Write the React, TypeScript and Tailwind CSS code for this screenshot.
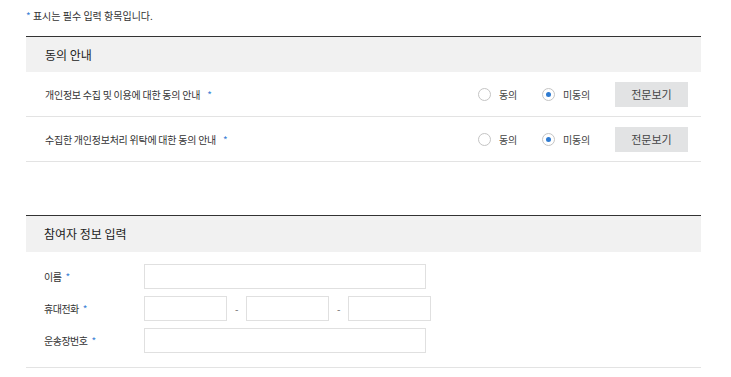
import React from "react";

const font = { fontFamily: '"Noto Sans CJK KR", "Noto Sans", sans-serif' };

function Star() {
  return <span className="text-[#3b82d6] ml-[4px]">*</span>;
}

function Radio({ checked, label }: { checked?: boolean; label: string }) {
  return (
    <div className="flex items-center">
      <span className="w-[13px] h-[13px] rounded-full border border-[#c4c4c4] bg-white flex items-center justify-center">
        {checked && <span className="w-[5px] h-[5px] rounded-full bg-[#2f7bd1]" />}
      </span>
      <span className="ml-[8px] text-[10px] tracking-[-0.25px] text-[#444]">{label}</span>
    </div>
  );
}

function ConsentRow({ title }: { title: string }) {
  return (
    <div className="h-[45px] border-b border-[#e3e3e3] flex items-center pl-[19px] pr-[13px]">
      <div className="text-[10px] tracking-[-0.25px] text-[#333] flex-1">
        {title}
        <span className="text-[#3b82d6] ml-[7px]">*</span>
      </div>
      <div className="flex items-center">
        <div className="w-[64px]">
          <Radio label="동의" />
        </div>
        <div className="w-[73px]">
          <Radio checked label="미동의" />
        </div>
        <button className="w-[73px] h-[25px] bg-[#e2e3e4] text-[11px] text-[#444]">전문보기</button>
      </div>
    </div>
  );
}

function Input({ w }: { w: string }) {
  return <div className={`${w} h-[25px] border border-[#e0e0e0] bg-white`} />;
}

export default function App() {
  return (
    <div className="w-[731px] h-[377px] bg-white overflow-hidden" style={font}>
      <div className="pl-[26px] w-[701px]">
        <div className="h-[36px] pt-[9px] text-[10px] text-[#333] leading-[14px]">
          <span className="text-[#3b82d6]">*</span> 표시는 필수 입력 항목입니다.
        </div>
        <div className="border-t border-[#333]">
          <div className="h-[35px] bg-[#f1f1f1] flex items-center pl-[19px] text-[12px] text-[#222]">동의 안내</div>
          <ConsentRow title="개인정보 수집 및 이용에 대한 동의 안내" />
          <ConsentRow title="수집한 개인정보처리 위탁에 대한 동의 안내" />
        </div>
        <div className="h-[53px]" />
        <div className="border-t border-[#333] border-b-[#e3e3e3] border-b">
          <div className="h-[36px] bg-[#f1f1f1] flex items-center pl-[18px] text-[12px] text-[#222]">참여자 정보 입력</div>
          <div className="pt-[12px] pb-[14px] flex flex-col gap-[7px] text-[10px] tracking-[-0.5px] text-[#333]">
            <div className="flex items-center">
              <div className="w-[118px] pl-[18px]">이름<Star /></div>
              <Input w="w-[282px]" />
            </div>
            <div className="flex items-center">
              <div className="w-[118px] pl-[18px]">휴대전화<Star /></div>
              <Input w="w-[83px]" />
              <span className="w-[19px] text-center text-[#666]">-</span>
              <Input w="w-[83px]" />
              <span className="w-[19px] text-center text-[#666]">-</span>
              <Input w="w-[83px]" />
            </div>
            <div className="flex items-center">
              <div className="w-[118px] pl-[18px]">운송장번호<Star /></div>
              <Input w="w-[282px]" />
            </div>
          </div>
        </div>
      </div>
    </div>
  );
}
